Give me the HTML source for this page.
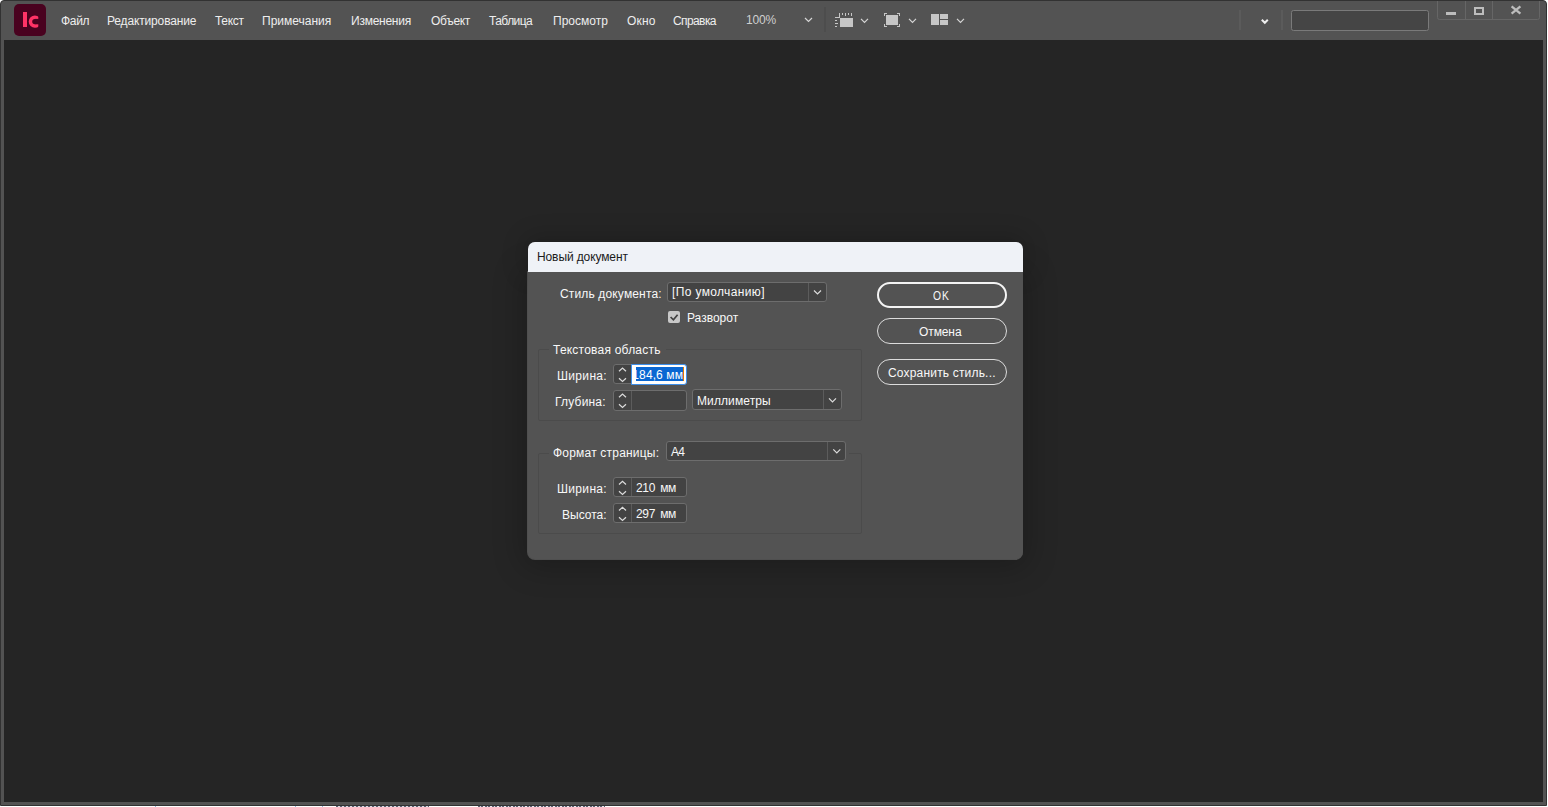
<!DOCTYPE html>
<html><head><meta charset="utf-8">
<style>
*{margin:0;padding:0;box-sizing:border-box}
html,body{width:1548px;height:807px;overflow:hidden;background:#fff;font-family:"Liberation Sans",sans-serif}
.a{position:absolute}
.t{position:absolute;white-space:nowrap;line-height:14px;font-size:12px;color:#eeeeee}
.dt{color:#f8f8f8}
svg{position:absolute;overflow:visible}
#win{left:0;top:0;width:1547px;height:806px;background:#535353;border:1px solid #323232;border-radius:4px 4px 0 0}
#canvas{left:4px;top:40px;width:1539px;height:762px;background:#252525}
#dlg{left:528px;top:242px;width:495px;height:317px;background:#535353;border-radius:7px 7px 7px 7px;overflow:hidden}
#dtitle{left:0;top:0;width:495px;height:30px;background:#eff2f7}
.dd{position:absolute;background:#434343;border:1px solid #6d6d6d;border-radius:3px}
.dd i{position:absolute;top:0;bottom:0;width:1px;background:#5c5c5c}
.sp{position:absolute;width:74px;height:20px;background:#434343;border:1px solid #6d6d6d;border-radius:3px}
.sp i{position:absolute;top:0;bottom:0;left:17px;width:1px;background:#5c5c5c}
.grp{position:absolute;border:1px solid #4b4b4b;border-radius:2px}
.lblbg{position:absolute;background:#535353}
.btn{position:absolute;left:877px;width:130px;height:26px;border:1px solid #dcdcdc;border-radius:13px}
</style></head><body>
<div id="win" class="a"></div>
<div id="canvas" class="a"></div>
<div class="a" style="left:336px;top:806px;width:93px;height:1px;background:repeating-linear-gradient(90deg,#5a6070 0 2px,#d8dce4 2px 4px)"></div>
<div class="a" style="left:478px;top:806px;width:127px;height:1px;background:repeating-linear-gradient(90deg,#5a6070 0 2px,#d8dce4 2px 3px,#5a6070 3px 5px,#e8eaf0 5px 7px)"></div>
<div class="a" style="left:155px;top:806px;width:1px;height:1px;background:#8fb4e0"></div>
<div class="a" style="left:295px;top:806px;width:1px;height:1px;background:#8fb4e0"></div>
<div class="a" style="left:322px;top:806px;width:1px;height:1px;background:#8fb4e0"></div>

<!-- logo -->
<div class="a" style="left:14px;top:4px;width:32px;height:32px;background:#49021f;border-radius:5px"></div>
<svg style="left:0;top:0" width="60" height="40"><rect x="23" y="12" width="4" height="15" fill="#ff3366"/><defs><clipPath id="cc"><rect x="20" y="10" width="18.3" height="20"/></clipPath></defs><circle cx="34.9" cy="21.6" r="4.45" fill="none" stroke="#ff3366" stroke-width="3.5" clip-path="url(#cc)"/><rect x="34.9" y="18.9" width="5" height="5.4" fill="#49021f"/></svg>

<!-- menu -->
<span class="t" style="left:61px;top:14px;letter-spacing:-0.33px">Файл</span>
<span class="t" style="left:107px;top:14px;letter-spacing:-0.15px">Редактирование</span>
<span class="t" style="left:215px;top:14px;letter-spacing:-0.33px">Текст</span>
<span class="t" style="left:262px;top:14px">Примечания</span>
<span class="t" style="left:351px;top:14px;letter-spacing:-0.25px">Изменения</span>
<span class="t" style="left:431px;top:14px;letter-spacing:-0.3px">Объект</span>
<span class="t" style="left:489px;top:14px;letter-spacing:-0.55px">Таблица</span>
<span class="t" style="left:553px;top:14px">Просмотр</span>
<span class="t" style="left:627px;top:14px;letter-spacing:0.2px">Окно</span>
<span class="t" style="left:673px;top:14px;letter-spacing:-0.6px">Справка</span>
<span class="t" style="left:746px;top:13px;letter-spacing:-0.2px;color:#cfcfcf">100%</span>

<!-- toolbar icons -->
<svg style="left:0;top:0" width="1548" height="40">
  <g fill="none" stroke="#d6d6d6" stroke-width="1.2">
    <path d="M805 18 L808.5 21.5 L812 18"/>
    <path d="M861 18.8 L864.5 22.3 L868 18.8"/>
    <path d="M909 18.8 L912.5 22.3 L916 18.8"/>
    <path d="M957 18.8 L960.5 22.3 L964 18.8"/>
  </g>
  <rect x="824" y="7" width="2" height="25" fill="#4d4d4d"/>
  <g fill="#c6c6c6">
    <rect x="840" y="18" width="13" height="9"/>
    <rect x="839" y="13" width="1" height="5"/><rect x="835" y="17" width="5" height="1"/>
    <rect x="842" y="13" width="1" height="2"/><rect x="845" y="13" width="1" height="3"/>
    <rect x="848" y="13" width="1" height="2"/><rect x="851" y="13" width="1" height="3"/>
    <rect x="835" y="20" width="2" height="1"/><rect x="835" y="23" width="3" height="1"/><rect x="835" y="26" width="2" height="1"/>
    <rect x="886" y="15" width="12" height="10"/>
    <path d="M884 13h3v1h-2v2h-1z M900 13h-3v1h2v2h1z M884 27h3v-1h-2v-2h-1z M900 27h-3v-1h2v-2h1z"/>
    <rect x="931" y="14" width="8" height="11"/>
    <rect x="940" y="14" width="8" height="5"/>
    <rect x="940" y="20" width="8" height="5"/>
  </g>
  <rect x="1239" y="10" width="2" height="20" fill="#5b5b5b"/>
  <path d="M1261.8 19.8 L1264.8 22.8 L1267.8 19.8" fill="none" stroke="#eeeeee" stroke-width="2"/>
  <rect x="1281" y="10" width="2" height="20" fill="#5b5b5b"/>
  <rect x="1291.5" y="10.5" width="137" height="20" rx="2" fill="#454545" stroke="#7a7a7a"/>
  <path d="M1437.5 1 V17.5 a2 2 0 0 0 2 2 H1537.5 a2 2 0 0 0 2 -2 V1" fill="none" stroke="#666"/>
  <rect x="1465" y="1" width="1" height="18" fill="#666"/>
  <rect x="1492" y="1" width="1" height="18" fill="#666"/>
  <rect x="1446" y="12" width="10" height="3" fill="#bdbdbd"/>
  <rect x="1475" y="8" width="8" height="6" fill="none" stroke="#bdbdbd" stroke-width="2"/>
  <path d="M1511.6 6.4 L1520.4 13.6 M1520.4 6.4 L1511.6 13.6" stroke="#bdbdbd" stroke-width="2.3"/>
</svg>

<!-- dialog -->
<div class="a" style="left:527px;top:271px;width:496px;height:289px;background:#4f4f4f;border-radius:0 0 8px 8px;box-shadow:0 3px 30px 5px rgba(0,0,0,0.22)"></div>
<div class="a" style="left:528px;top:242px;width:495px;height:30px;border-radius:7px 7px 0 0;box-shadow:0 -2px 24px 3px rgba(0,0,0,0.18)"></div>
<div id="dlg" class="a">
  <div id="dtitle" class="a"></div>
</div>
<span class="t" style="left:537px;top:250px;color:#1a1a1a;letter-spacing:-0.11px">Новый документ</span>

<span class="t dt" style="left:560px;top:287px;letter-spacing:0.15px">Стиль документа:</span>
<div class="dd" style="left:667px;top:282px;width:160px;height:20px"><i style="left:140px"></i></div>
<span class="t dt" style="left:672px;top:285px;letter-spacing:0.36px">[По умолчанию]</span>

<div class="a" style="left:668px;top:311px;width:12px;height:12px;background:#c8c8c8;border-radius:2px"></div>
<svg style="left:0;top:0" width="1" height="1"><path d="M670.6 317 L673.4 319.8 L677.6 314.8" fill="none" stroke="#424242" stroke-width="1.7"/></svg>
<span class="t dt" style="left:687px;top:311px">Разворот</span>

<div class="grp" style="left:538px;top:349px;width:324px;height:72px"></div>
<div class="lblbg" style="left:549px;top:340px;width:117px;height:14px"></div>
<span class="t dt" style="left:553px;top:343px;letter-spacing:0.22px">Текстовая область</span>

<span class="t dt" style="left:557px;top:369px;letter-spacing:0.33px">Ширина:</span>
<div class="sp" style="left:613px;top:364px"><i></i></div>
<div class="a" style="left:631px;top:364px;width:56px;height:21px;background:#fff;border:1px solid #3d8ee8;border-radius:0 3px 3px 0"></div>
<div class="a" style="left:636px;top:367px;width:47px;height:14px;background:#0a67d2;overflow:hidden">
  <span class="t" style="right:0;top:1px;color:#fff;letter-spacing:0.1px">184,6 мм</span>
</div>
<div class="a" style="left:683px;top:367px;width:1px;height:14px;background:#e07b00"></div>

<span class="t dt" style="left:555px;top:395px;letter-spacing:0.2px">Глубина:</span>
<div class="sp" style="left:613px;top:390px;height:21px"><i></i></div>
<div class="dd" style="left:692px;top:389px;width:150px;height:21px"><i style="left:130px"></i></div>
<span class="t dt" style="left:697px;top:394px;letter-spacing:0.1px">Миллиметры</span>

<div class="grp" style="left:538px;top:453px;width:324px;height:81px"></div>
<div class="lblbg" style="left:549px;top:440px;width:300px;height:22px"></div>
<span class="t dt" style="left:553px;top:446px;letter-spacing:0.2px">Формат страницы:</span>
<div class="dd" style="left:666px;top:441px;width:180px;height:20px"><i style="left:160px"></i></div>
<span class="t dt" style="left:671px;top:445px;letter-spacing:-0.8px">A4</span>

<span class="t dt" style="left:557px;top:482px;letter-spacing:0.33px">Ширина:</span>
<div class="sp" style="left:613px;top:477px"><i></i></div>
<span class="t dt" style="left:636px;top:481px;word-spacing:2px;letter-spacing:-0.3px">210 мм</span>
<span class="t dt" style="left:562px;top:508px">Высота:</span>
<div class="sp" style="left:613px;top:503px"><i></i></div>
<span class="t dt" style="left:636px;top:507px;word-spacing:2px;letter-spacing:-0.3px">297 мм</span>

<svg style="left:0;top:0" width="1" height="1">
  <g fill="none" stroke="#dcdcdc" stroke-width="1.2">
    <path d="M814 290.5 L817.5 294 L821 290.5"/>
    <path d="M829 398.3 L832.5 401.8 L836 398.3"/>
    <path d="M833.3 449.3 L836.8 452.8 L840.3 449.3"/>
    <path d="M619 371.3 L622.5 368 L626 371.3 M619 378.3 L622.5 381.5 L626 378.3"/>
    <path d="M619 397.3 L622.5 394 L626 397.3 M619 404.3 L622.5 407.5 L626 404.3"/>
    <path d="M619 484.5 L622.5 481.2 L626 484.5 M619 491.3 L622.5 494.5 L626 491.3"/>
    <path d="M619 510.5 L622.5 507.2 L626 510.5 M619 517.3 L622.5 520.5 L626 517.3"/>
  </g>
</svg>

<div class="btn" style="top:282px;border:2px solid #f4f4f4"></div>
<div class="btn" style="top:318px"></div>
<div class="btn" style="top:359px"></div>
<span class="t dt" style="left:933px;top:289px;letter-spacing:1.2px;transform:scaleX(0.86);transform-origin:0 0">OK</span>
<span class="t dt" style="left:919px;top:325px;letter-spacing:-0.1px">Отмена</span>
<span class="t dt" style="left:888px;top:366px;letter-spacing:0.18px">Сохранить стиль...</span>
</body></html>
